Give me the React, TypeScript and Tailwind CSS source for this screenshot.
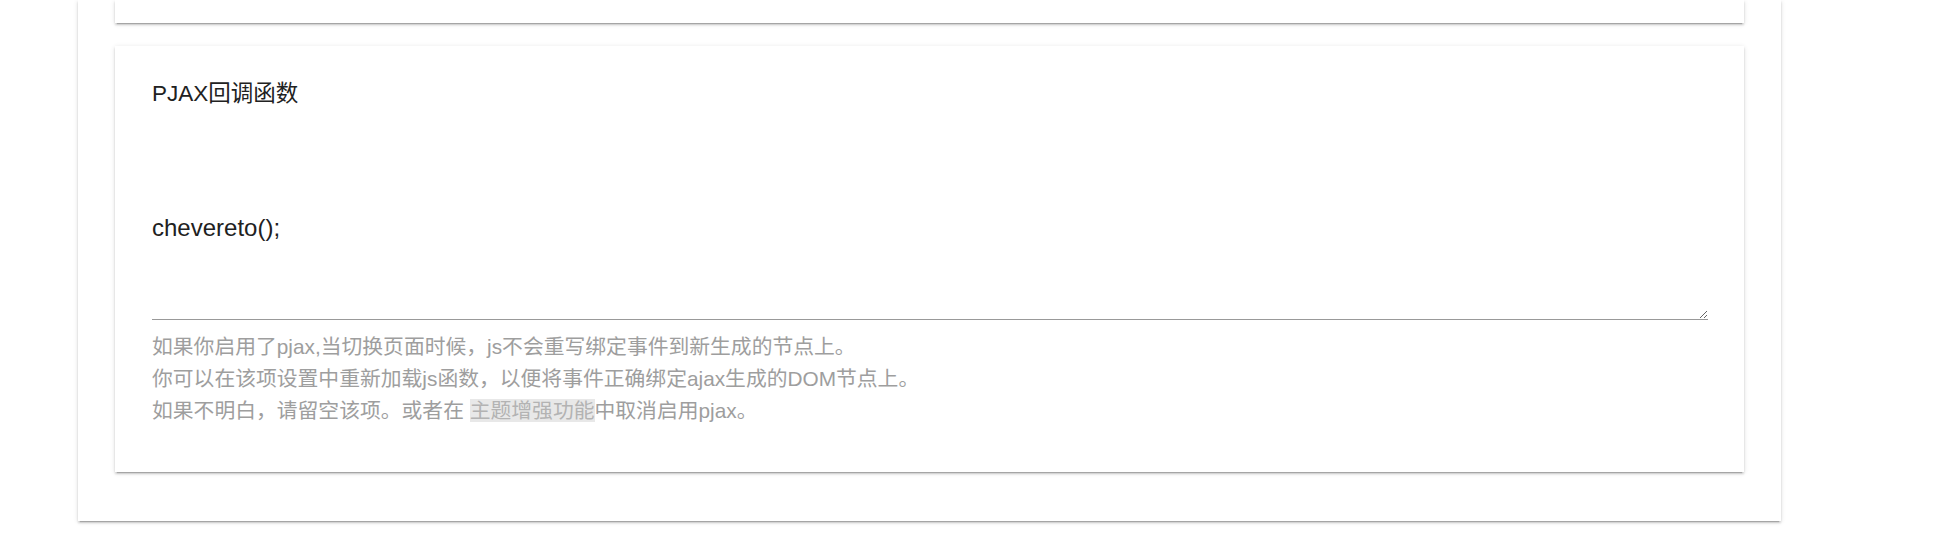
const font = { fontFamily: '"Liberation Sans", "Noto Sans CJK SC", Arial, sans-serif' }

const cardShadow =
  'shadow-[0_2px_2px_0_rgba(0,0,0,0.14),0_3px_1px_-2px_rgba(0,0,0,0.2),0_1px_5px_0_rgba(0,0,0,0.12)]'

export default function App() {
  return (
    <div className="min-h-[539px] bg-white pb-[20px]" style={font}>
      {/* outer panel, scrolled so its top is off screen */}
      <div
        className={`ml-[78px] w-[1703px] bg-white px-[37px] pb-[49px] ${cardShadow}`}
      >
        {/* tail of the previous option card */}
        <div className={`h-[23px] bg-white ${cardShadow}`} />

        <div className={`mt-[23px] bg-white pl-[37px] pr-[36px] pt-[33px] pb-[45px] ${cardShadow}`}>
          <p className="text-[22.5px] leading-[30px] text-[#212121]">PJAX回调函数</p>

          <textarea
            className="mt-[20px] block h-[191px] w-full border-0 border-b border-[#999] bg-transparent pt-[82px] text-[24px] leading-[34px] text-[#212121] outline-none"
            style={font}
            defaultValue="chevereto();"
          />

          <div className="mt-[11px] text-[20.8px] leading-[32px] text-[#9e9e9e]">
            <p>如果你启用了pjax,当切换页面时候，js不会重写绑定事件到新生成的节点上。</p>
            <p>你可以在该项设置中重新加载js函数，以便将事件正确绑定ajax生成的DOM节点上。</p>
            <p>
              如果不明白，请留空该项。或者在{' '}
              <a className="bg-[#e8e8e8] text-[#b3b3b3]">主题增强功能</a>
              中取消启用pjax。
            </p>
          </div>
        </div>
      </div>
    </div>
  )
}
